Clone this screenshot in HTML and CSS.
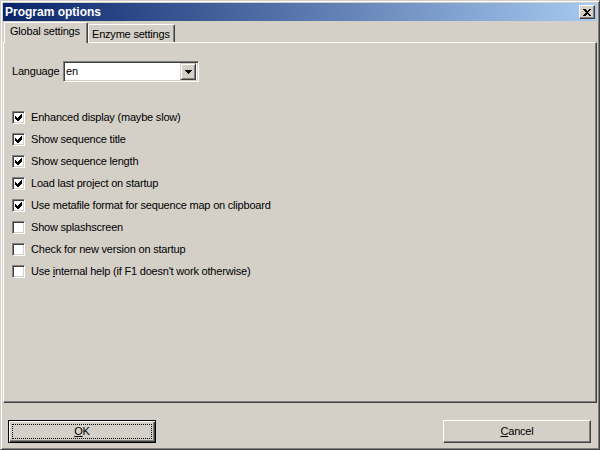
FILE: index.html
```html
<!DOCTYPE html>
<html>
<head>
<meta charset="utf-8">
<link rel="stylesheet" href="styles.css">
</head>
<body>
<div class="window">
  <div class="titlebar">
    <span class="title">Program options</span>
    <span class="close"><svg width="8" height="7" viewBox="0 0 8 7" shape-rendering="crispEdges"><polygon points="0,0 2,0 4,2 6,0 8,0 5,3.5 8,7 6,7 4,5 2,7 0,7 3,3.5" fill="#000"/></svg></span>
  </div>
  <div class="tabs">
    <div class="tab active">Global settings</div>
    <div class="tab">Enzyme settings</div>
  </div>
  <div class="page">
    <div class="lang-row">
      <span class="lang-label">Language</span>
      <div class="combo">
        <span class="combo-text">en</span>
        <span class="combo-btn"><svg width="7" height="4" viewBox="0 0 7 4" shape-rendering="crispEdges"><polygon points="0,0 7,0 3.5,4" fill="#000"/></svg></span>
      </div>
    </div>
    <ul class="checks">
      <li class="check"><span class="box"><svg class="tick" width="13" height="13" viewBox="0 0 13 13" shape-rendering="crispEdges"><polygon points="3,5 5,7 9,3 10,3 10,6 6,10 5,10 3,8" fill="#000"/></svg></span><span class="label">Enhanced display (maybe slow)</span></li>
      <li class="check"><span class="box"><svg class="tick" width="13" height="13" viewBox="0 0 13 13" shape-rendering="crispEdges"><polygon points="3,5 5,7 9,3 10,3 10,6 6,10 5,10 3,8" fill="#000"/></svg></span><span class="label">Show sequence title</span></li>
      <li class="check"><span class="box"><svg class="tick" width="13" height="13" viewBox="0 0 13 13" shape-rendering="crispEdges"><polygon points="3,5 5,7 9,3 10,3 10,6 6,10 5,10 3,8" fill="#000"/></svg></span><span class="label">Show sequence length</span></li>
      <li class="check"><span class="box"><svg class="tick" width="13" height="13" viewBox="0 0 13 13" shape-rendering="crispEdges"><polygon points="3,5 5,7 9,3 10,3 10,6 6,10 5,10 3,8" fill="#000"/></svg></span><span class="label">Load last project on startup</span></li>
      <li class="check"><span class="box"><svg class="tick" width="13" height="13" viewBox="0 0 13 13" shape-rendering="crispEdges"><polygon points="3,5 5,7 9,3 10,3 10,6 6,10 5,10 3,8" fill="#000"/></svg></span><span class="label">Use metafile format for sequence map on clipboard</span></li>
      <li class="check"><span class="box"></span><span class="label">Show splashscreen</span></li>
      <li class="check"><span class="box"></span><span class="label">Check for new version on startup</span></li>
      <li class="check"><span class="box"></span><span class="label">Use <u>i</u>nternal help (if F1 doesn't work otherwise)</span></li>
    </ul>
  </div>
  <div class="footer">
    <button class="btn default"><span class="focus"><u>O</u>K</span></button>
    <button class="btn"><span><u>C</u>ancel</span></button>
  </div>
</div>
</body>
</html>
```
FILE: styles.css
```css
html, body {
  margin: 0;
  padding: 0;
  background: #D4D0C8;
}
body {
  font-family: "Liberation Sans", Arial, sans-serif;
  font-size: 11px;
  letter-spacing: -0.2px;
  color: #000;
}
.window {
  width: 600px;
  height: 450px;
  box-sizing: border-box;
  border: 1px solid;
  border-color: #D4D0C8 #404040 #404040 #D4D0C8;
  box-shadow: inset 1px 1px #fff, inset -1px -1px #808080;
  padding: 2px;
  display: flex;
  flex-direction: column;
  background: #D4D0C8;
}
.titlebar {
  height: 18px;
  flex: none;
  background: linear-gradient(to right, #0A246A, #A6CAF0);
  display: flex;
  align-items: center;
  justify-content: space-between;
  padding: 0 2px 0 2px;
}
.title {
  color: #fff;
  font-weight: bold;
  font-size: 12px;
  letter-spacing: 0;
  line-height: 14px;
}
.close {
  width: 16px;
  height: 14px;
  box-sizing: border-box;
  background: #D4D0C8;
  border: 1px solid;
  border-color: #fff #404040 #404040 #fff;
  box-shadow: inset -1px -1px #808080;
  display: flex;
  align-items: center;
  justify-content: center;
}
.close svg { display: block; }
.tabs {
  display: flex;
  align-items: flex-end;
  height: 20px;
  flex: none;
  margin-top: 1px;
  padding-left: 1px;
}
.tab {
  box-sizing: border-box;
  height: 18px;
  width: 87px;
  border: 1px solid;
  border-bottom: none;
  border-color: #fff #404040 #fff #fff;
  box-shadow: inset -1px 0 #808080;
  border-radius: 2px 2px 0 0;
  padding: 3px 0 0 3px;
  line-height: 13px;
  white-space: nowrap;
  background: #D4D0C8;
}
.tab.active {
  width: 84px;
  height: 21px;
  margin-bottom: -1px;
  position: relative;
  z-index: 1;
  padding: 2px 0 0 5px;
}
.page {
  height: 361px;
  flex: none;
  box-sizing: border-box;
  border: 1px solid;
  border-color: #fff #404040 #404040 #fff;
  box-shadow: inset -1px -1px #808080;
  padding: 18px 0 0 8px;
}
.lang-row {
  display: flex;
  align-items: center;
  height: 21px;
}
.lang-label {
  width: 51px;
  line-height: 13px;
}
.combo {
  width: 136px;
  height: 21px;
  box-sizing: border-box;
  border: 1px solid;
  border-color: #808080 #fff #fff #808080;
  box-shadow: inset 1px 1px #404040, inset -1px -1px #D4D0C8;
  background: #fff;
  padding: 2px;
  display: flex;
  align-items: center;
  justify-content: space-between;
}
.combo-text { line-height: 13px; }
.combo-btn {
  width: 16px;
  height: 17px;
  box-sizing: border-box;
  background: #D4D0C8;
  border: 1px solid;
  border-color: #D4D0C8 #404040 #404040 #D4D0C8;
  box-shadow: inset 1px 1px #fff, inset -1px -1px #808080;
  display: flex;
  align-items: center;
  justify-content: center;
}
.combo-btn svg { display: block; }
.checks {
  list-style: none;
  margin: 29px 0 0;
  padding: 0;
  display: flex;
  flex-direction: column;
  gap: 9px;
}
.check {
  display: flex;
  align-items: center;
  height: 13px;
  gap: 6px;
}
.box {
  flex: none;
  width: 13px;
  height: 13px;
  box-sizing: border-box;
  background: #fff;
  border: 1px solid;
  border-color: #808080 #fff #fff #808080;
  box-shadow: inset 1px 1px #404040, inset -1px -1px #D4D0C8;
}
.tick {
  display: block;
  margin: -1px;
}
.label {
  line-height: 13px;
  white-space: nowrap;
}
.footer {
  display: flex;
  justify-content: space-between;
  padding: 17px 6px 0 5px;
}
.btn {
  width: 148px;
  height: 23px;
  box-sizing: border-box;
  font: inherit;
  letter-spacing: inherit;
  color: #000;
  background: #D4D0C8;
  border: 1px solid;
  border-color: #fff #404040 #404040 #fff;
  box-shadow: inset -1px -1px #808080;
  padding: 0;
  display: flex;
  align-items: center;
  justify-content: center;
  line-height: 13px;
}
.btn.default {
  border-color: #000;
  box-shadow: inset 1px 1px #fff, inset -1px -1px #404040, inset -2px -2px #808080;
}
.focus {
  box-sizing: border-box;
  width: 140px;
  height: 15px;
  border: 1px dotted #000;
  display: flex;
  align-items: center;
  justify-content: center;
}
```
